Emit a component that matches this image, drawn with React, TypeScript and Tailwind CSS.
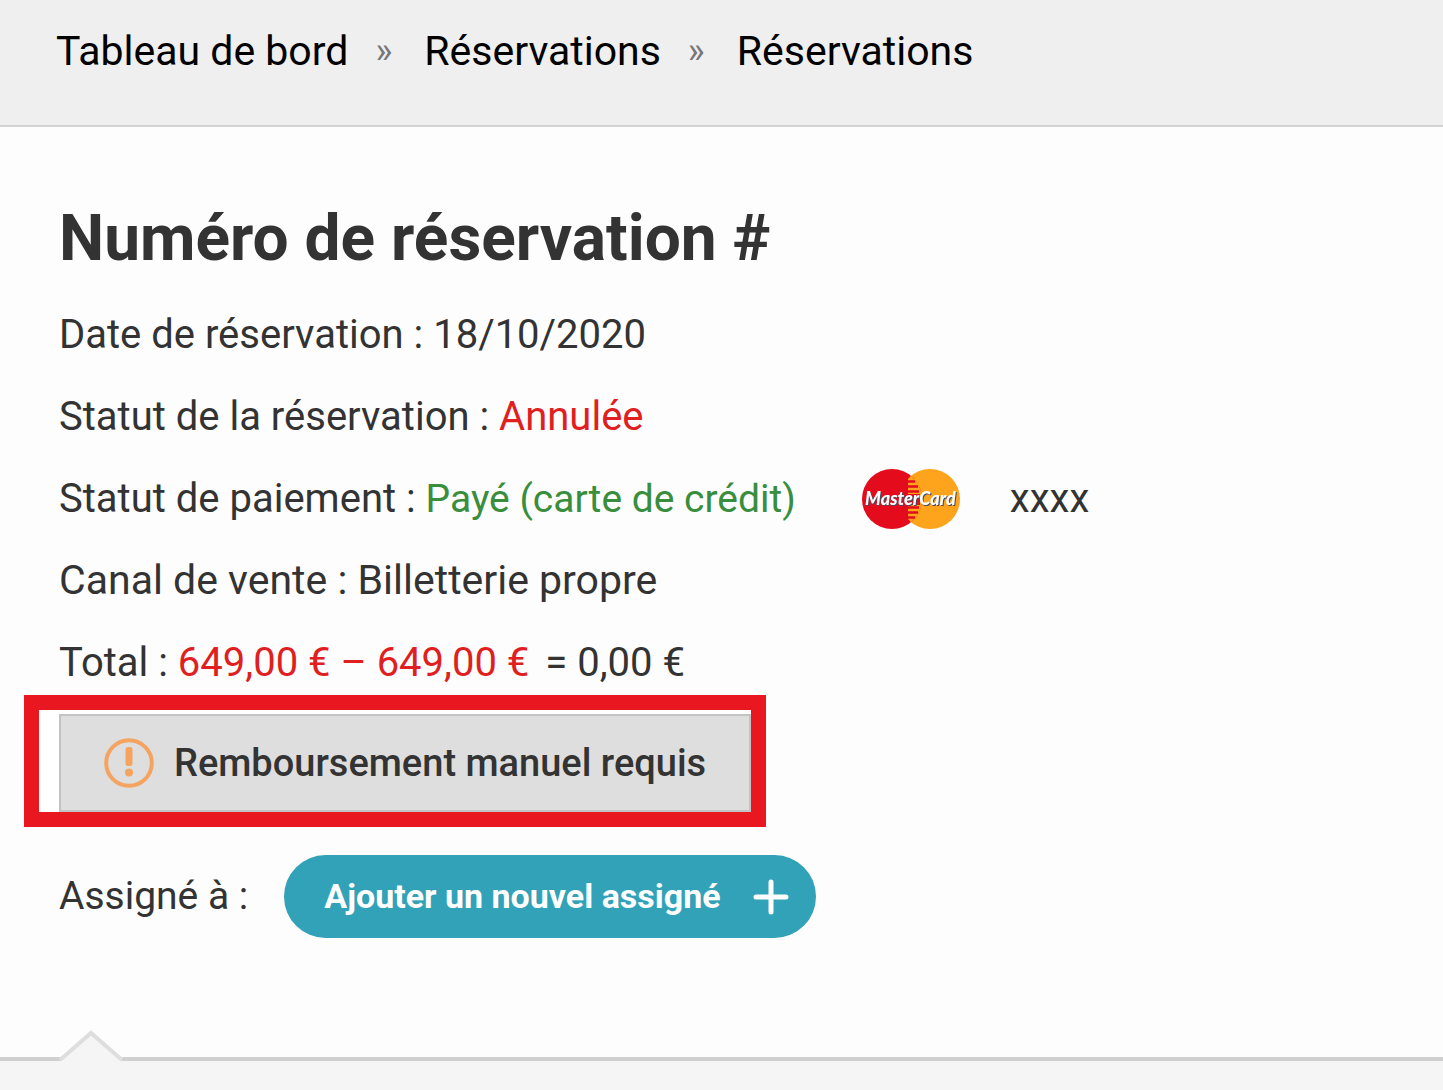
import clsx from "clsx";
import type { ReactNode } from "react";

const crumbs = ["Tableau de bord", "Réservations", "Réservations"];

function Row({ label, className, children }: { label: string; className?: string; children: ReactNode }) {
  return (
    <div className={clsx("flex h-[82px] items-center whitespace-pre", className)}>
      <dt>{label} : </dt>
      <dd className="flex items-center">{children}</dd>
    </div>
  );
}

function MasterCard() {
  return (
    <svg viewBox="0 0 98 60" className="ml-[66px] h-[60px] w-[98px]" role="img" aria-label="MasterCard">
      <circle cx="68" cy="30" r="30" fill="#fda41c" />
      <circle cx="30" cy="30" r="30" fill="#e30b1c" />
      <path d="M49 6.800A30 30 0 0 1 60 30A30 30 0 0 1 49 53.200L46 50V10z" fill="#fda41c" />
      {/* interlocking bars */}
      <path d="M45 12.500h8M44 17.500h12M44 22.500h13M44 38.500h13M44 43.500h12M45 48.500h8" stroke="#e30b1c" strokeWidth="2.600" />
      <path d="M44 25h14v11h-14z" fill="#e30b1c" />
      <text
        x="3"
        y="36"
        fill="#fff"
        className="font-['Lato',sans-serif] text-[18px] font-black italic [filter:drop-shadow(1px_1px_0_#4a4a5c)]"
      >
        MasterCard
      </text>
    </svg>
  );
}

function WarningIcon() {
  return (
    <svg viewBox="0 0 50 50" className="size-[50px]" aria-hidden="true">
      <circle cx="25" cy="25" r="22.800" fill="none" stroke="#f4a460" strokeWidth="4" />
      <rect x="21.500" y="9" width="7" height="19" rx="2.500" fill="#f4a460" />
      <circle cx="25" cy="34.500" r="4" fill="#f4a460" />
    </svg>
  );
}

export default function App() {
  return (
    <div className="flex min-h-screen flex-col bg-[#fdfdfd] font-['Roboto',sans-serif] text-[40px] text-[#333]">
      <nav className="h-[127px] border-b-2 border-[#d2d2d2] bg-[#efefef] px-14 pt-[21px] text-black">
        <ol className="flex items-center text-[41px] leading-[60px]">
          {crumbs.map((crumb, i) => (
            <li key={i} className="flex">
              {i > 0 && <span className="pr-8 pl-[27px] text-[36px] text-[#777]">»</span>}
              <a href="#">{crumb}</a>
            </li>
          ))}
        </ol>
      </nav>

      <main className="px-[59px] pt-[73px] pb-[119px]">
        <h1 className="text-[64px] leading-[78px] font-bold">Numéro de réservation #</h1>
        <dl className="mt-4">
          <Row label="Date de réservation">18/10/2020</Row>
          <Row label="Statut de la réservation">
            <span className="text-[#e02020]">Annulée</span>
          </Row>
          <Row label="Statut de paiement">
            <span className="text-[39px] text-[#388e3c]">Payé (carte de crédit)</span>
            <MasterCard />
            <span className="ml-[50px]">xxxx</span>
          </Row>
          <Row label="Canal de vente" className="text-[41px]">
            Billetterie propre
          </Row>
          <Row label="Total">
            <span className="text-[#e02020]">649,00 € – 649,00 €</span>
            <span className="ml-4">= 0,00 €</span>
          </Row>
        </dl>

        <div className="-mt-[9px] -ml-[35px] w-fit border-[15px] border-[#e91820] bg-white pt-1 pl-5">
          <button
            type="button"
            className="flex h-[98px] items-center gap-5 border-2 border-[#c2c4c4] bg-[#dedede] px-[43px] text-[38px] font-medium"
          >
            <WarningIcon />
            Remboursement manuel requis
          </button>
        </div>

        <div className="mt-7 flex items-center">
          <span className="text-[39px]">Assigné à :</span>
          <button
            type="button"
            className="ml-9 flex h-[83px] items-center gap-8 rounded-full bg-[#31a2b7] px-[27px] pl-10 text-[34px] font-bold text-white"
          >
            Ajouter un nouvel assigné
            <svg viewBox="0 0 36 36" className="size-9" aria-hidden="true">
              <path d="M18 3v30M3 18h30" stroke="#fff" strokeWidth="5" strokeLinecap="round" />
            </svg>
          </button>
        </div>
      </main>

      <section className="relative grow border-t-4 border-[#d0d0d0] bg-[#f5f5f5]">
        <svg viewBox="0 0 64 34" className="absolute -top-8 left-[59px] h-[34px] w-16" aria-hidden="true">
          <path d="M1 34V32L32 4L63 32V34z" fill="#f5f5f5" />
          <path d="M1 31L32 4L63 31" fill="none" stroke="#dedede" strokeWidth="4" />
        </svg>
      </section>
    </div>
  );
}
